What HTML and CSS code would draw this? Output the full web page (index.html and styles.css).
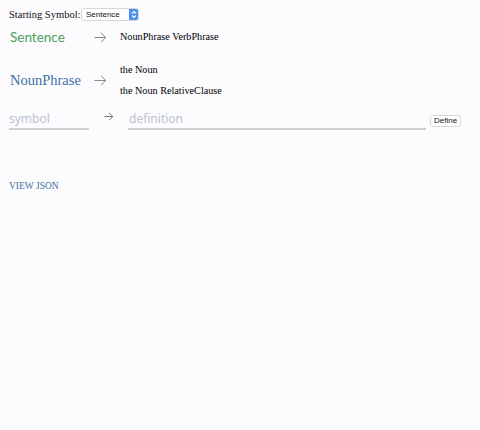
FILE: index.html
```html
<!DOCTYPE html>
<html>
<head>
<meta charset="utf-8">
<link rel="stylesheet" href="styles.css">
</head>
<body>
<div class="page">
  <div class="start">
    <span class="start-label">Starting Symbol:</span>
    <span class="select">
      <span class="select-text">Sentence</span>
      <span class="select-btn">
        <svg width="8" height="11" viewBox="0 0 8 11"><path d="M2 4.5 L4 2.5 L6 4.5 M2 6.5 L4 8.5 L6 6.5" fill="none" stroke="#fff" stroke-width="1.1"/></svg>
      </span>
    </span>
  </div>

  <div class="rule rule-first">
    <div class="symbol green">Sentence</div>
    <div class="arrow">
      <svg width="13" height="11" viewBox="0 0 13 11"><path d="M0.5 5.5 H12 M7 0.8 L11.8 5.5 L7 10.2" fill="none" stroke="#8a8a8a" stroke-width="1"/></svg>
    </div>
    <div class="defs">
      <div class="def">NounPhrase VerbPhrase</div>
    </div>
  </div>

  <div class="rule rule-second">
    <div class="symbol blue">NounPhrase</div>
    <div class="arrow">
      <svg width="13" height="11" viewBox="0 0 13 11"><path d="M0.5 5.5 H12 M7 0.8 L11.8 5.5 L7 10.2" fill="none" stroke="#8a8a8a" stroke-width="1"/></svg>
    </div>
    <div class="defs">
      <div class="def">the Noun</div>
      <div class="def">the Noun RelativeClause</div>
    </div>
  </div>

  <div class="new-rule">
    <div class="field field-symbol">symbol</div>
    <div class="arrow arrow-new">
      <svg width="10" height="9" viewBox="0 0 10 9"><path d="M0.5 4.5 H9 M5 0.8 L8.8 4.5 L5 8.2" fill="none" stroke="#777" stroke-width="1"/></svg>
    </div>
    <div class="field field-def">definition</div>
    <button class="define-btn">Define</button>
  </div>

  <div class="view-json">VIEW JSON</div>
</div>
</body>
</html>
```

FILE: styles.css
```css
html, body {
  margin: 0;
  padding: 0;
  background: #fcfbfe;
}
.page {
  width: 480px;
  height: 430px;
  padding: 7px 9px 0 9px;
  box-sizing: border-box;
  font-family: "Liberation Serif", serif;
  color: #111;
}
.start {
  display: flex;
  align-items: center;
  height: 15px;
}
.start-label {
  width: 72px;
  font-family: "Liberation Serif", serif;
  font-size: 10.5px;
}
.select {
  display: flex;
  align-items: center;
  width: 58px;
  height: 13px;
  border: 1px solid #d6d6d6;
  border-radius: 3px;
  background: #fff;
  box-sizing: border-box;
  overflow: hidden;
}
.select-text {
  flex: 1;
  font-family: "Liberation Sans", sans-serif;
  font-size: 8px;
  padding-left: 4px;
  color: #111;
}
.select-btn {
  width: 9px;
  height: 13px;
  background: #4a90f0;
  display: flex;
  align-items: center;
  justify-content: center;
}
.rule {
  display: flex;
  align-items: center;
}
.rule-first {
  margin-top: 7px;
  height: 16px;
}
.rule-second {
  margin-top: 12px;
  height: 46px;
}
.symbol {
  flex: 0 0 85px;
  padding-left: 1px;
  box-sizing: border-box;
}
.green {
  color: #4e9d5c;
  font-family: "Lato", sans-serif;
  font-size: 13.5px;
}
.blue {
  color: #3e6f9f;
  font-family: "Liberation Serif", serif;
  font-size: 14.5px;
}
.arrow {
  flex: 0 0 26px;
  display: flex;
  align-items: center;
}
.defs {
  display: flex;
  flex-direction: column;
  gap: 9px;
}
.def {
  font-family: "Liberation Serif", serif;
  font-size: 10.2px;
  color: #000;
  line-height: 12px;
}
.new-rule {
  display: flex;
  align-items: flex-end;
  margin-top: 5px;
  height: 22px;
}
.field {
  font-family: "Noto Sans", sans-serif;
  font-size: 12px;
  color: #b9c3cf;
  border-bottom: 2px solid #cfcfcf;
  padding-bottom: 1px;
  box-sizing: border-box;
}
.field-symbol {
  flex: 0 0 80px;
}
.arrow-new {
  flex: 0 0 39px;
  align-self: flex-start;
  padding-left: 15px;
  padding-top: 4px;
  box-sizing: border-box;
}
.field-def {
  flex: 0 0 298px;
  padding-left: 1px;
}
.define-btn {
  margin-left: 4px;
  margin-bottom: 3px;
  height: 12px;
  padding: 0 3px;
  font-family: "Liberation Sans", sans-serif;
  font-size: 8px;
  background: #fff;
  border: 1px solid #d8d8d8;
  border-radius: 3px;
  line-height: 10px;
  color: #111;
}
.view-json {
  margin-top: 51px;
  font-family: "Liberation Serif", serif;
  font-size: 9.5px;
  color: #3e6f9f;
}
```
